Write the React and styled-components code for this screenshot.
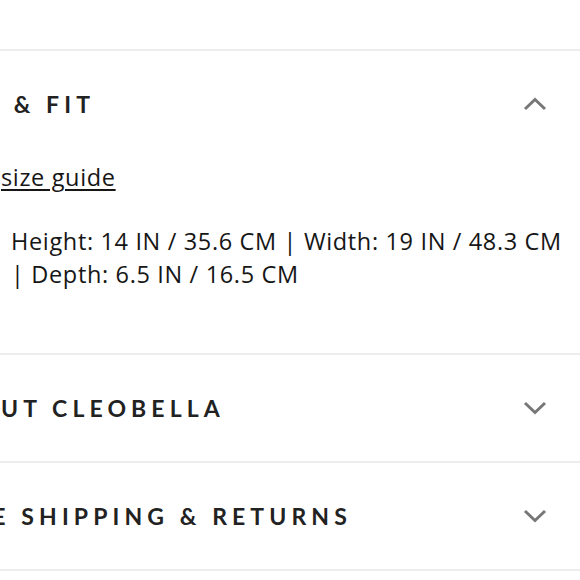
import React from "react";
import styled, { createGlobalStyle } from "styled-components";

const Global = createGlobalStyle`
  html, body { margin: 0; padding: 0; background: #ffffff; }
  * { box-sizing: border-box; }
`;

const Page = styled.div`
  width: 580px;
  height: 580px;
  overflow: hidden;
  padding-top: 49px;
  background: #fff;
`;

const Accordion = styled.div`
  margin-left: -64px;
  border-bottom: 2px solid #ececec;
`;

const Item = styled.section`
  border-top: 2px solid #ececec;
`;

const Header = styled.button`
  all: unset;
  box-sizing: border-box;
  display: flex;
  align-items: center;
  justify-content: space-between;
  width: 100%;
  height: 106px;
  padding-right: 33px;
  cursor: pointer;
`;

const Title = styled.h2`
  margin: 0;
  font-family: "Lato", "Liberation Sans", sans-serif;
  font-weight: 700;
  font-size: 23px;
  letter-spacing: 5.1px;
  color: #222222;
  text-transform: uppercase;
`;

const Body = styled.div`
  padding: 4px 14px 62px 17px;
  font-family: "Open Sans", "Liberation Sans", sans-serif;
  font-size: 23.5px;
  letter-spacing: 0.65px;
  line-height: 33px;
  color: #161616;
`;

const GuideLine = styled.p`
  margin: 0;
`;

const GuideLink = styled.a`
  color: inherit;
  text-decoration: underline;
  text-underline-offset: 3px;
  text-decoration-thickness: 1.5px;
`;

const Dims = styled.ul`
  margin: 31px 0 0;
  padding-left: 58px;
  list-style: none;
`;

const Dim = styled.li`
  margin: 0;
`;

const Chevron = ({ up }) => (
  <svg width="24" height="14" viewBox="0 0 24 14" fill="none" aria-hidden="true">
    <polyline
      points={up ? "2,12 12,2.5 22,12" : "2,2 12,11.5 22,2"}
      stroke="#777777"
      strokeWidth="3"
      strokeLinecap="butt"
      strokeLinejoin="miter"
    />
  </svg>
);

export default function App() {
  return (
    <>
      <Global />
      <Page>
        <Accordion>
          <Item>
            <Header>
              <Title>Size &amp; Fit</Title>
              <Chevron up />
            </Header>
            <Body>
              <GuideLine>
                See <GuideLink href="#">size guide</GuideLink>
              </GuideLine>
              <Dims>
                <Dim>
                  Height: 14 IN / 35.6 CM | Width: 19 IN / 48.3 CM | Depth: 6.5 IN / 16.5 CM
                </Dim>
              </Dims>
            </Body>
          </Item>
          <Item>
            <Header>
              <Title>About Cleobella</Title>
              <Chevron />
            </Header>
          </Item>
          <Item>
            <Header>
              <Title>Free Shipping &amp; Returns</Title>
              <Chevron />
            </Header>
          </Item>
        </Accordion>
      </Page>
    </>
  );
}
